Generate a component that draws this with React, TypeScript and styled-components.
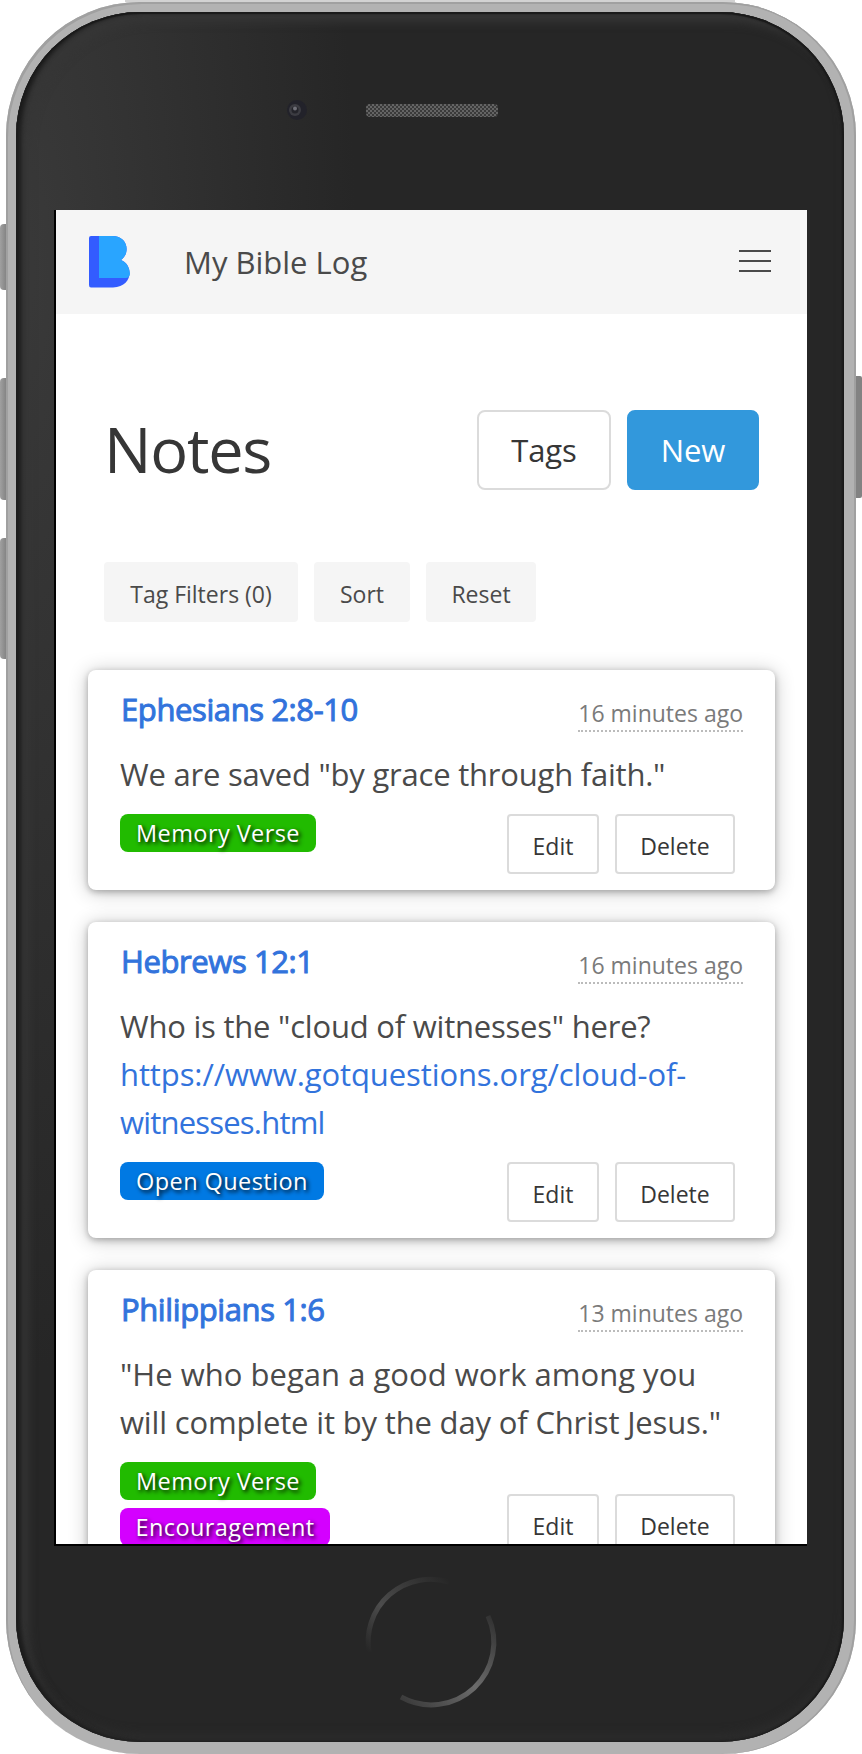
import React from "react";
import styled, { createGlobalStyle } from "styled-components";

const Global = createGlobalStyle`
  *, *::before, *::after { box-sizing: border-box; }
  body { margin: 0; background: #fff; }
`;

const Stage = styled.div`
  position: relative;
  width: 862px;
  height: 1754px;
  padding: 2px 6px 0;
  overflow: hidden;
  font-family: "Open Sans", "Noto Sans", sans-serif;
  color: #4a4a4a;
`;

const SideKey = styled.span<{ $side: "left" | "right"; $top: number; $height: number }>`
  position: absolute;
  ${(p) => p.$side}: 0;
  top: ${(p) => p.$top}px;
  width: 7px;
  height: ${(p) => p.$height}px;
  border-radius: ${(p) => (p.$side === "left" ? "4px 0 0 4px" : "0 2px 2px 0")};
  background: ${(p) =>
    p.$side === "left" ? "linear-gradient(90deg, #a0a0a0, #808080)" : "#828282"};
`;

const TopGlint = styled.span`
  position: absolute;
  top: 0;
  left: 125px;
  width: 610px;
  height: 2px;
  background: #d2d2d2;
`;

const Shell = styled.div`
  position: relative;
  width: 850px;
  height: 1752px;
  padding: 10px 12px 12px 10px;
  border-radius: 134px;
  background: #b2b2b2;
  box-shadow: inset 2px 2px 0 #a0a0a0, inset -2px 0 0 #a0a0a0;
`;

const Face = styled.div`
  display: flex;
  flex-direction: column;
  height: 1730px;
  padding: 0 38px;
  border-radius: 124px;
  background: radial-gradient(ellipse 340px 1100px at 0 260px, #3a3a3a, #262626);
  box-shadow: inset 0 2px 1px #1a1a1a, inset 5px 0 4px #1c1c1c, inset -2px 0 2px #1a1a1a,
    inset 12px 10px 10px #363636, inset 0 -8px 10px #2c2c2c;
`;

const TopBezel = styled.div`
  display: flex;
  flex: none;
  height: 198px;
  padding: 86px 0 0 233px;
  gap: 49px;
`;

const Screen = styled.main`
  flex: none;
  width: 753px;
  height: 1336px;
  border: solid #000;
  border-width: 0 0 2px 2px;
  background: #fff;
  overflow: hidden;
`;

const BottomBezel = styled.div`
  display: flex;
  justify-content: center;
  padding-top: 26px;
  padding-left: 2px;
`;

const Navbar = styled.header`
  display: flex;
  align-items: center;
  height: 104px;
  padding: 0 36px 0 32px;
  background: #f5f5f5;
`;

const Brand = styled.span`
  flex: 1;
  padding-left: 53px;
  font-size: 31px;
`;

const Burger = styled.span`
  display: flex;
  flex-direction: column;
  gap: 8px;
  width: 32px;
  margin-bottom: 2px;

  i {
    height: 2px;
    background: #4a4a4a;
  }
`;

const Heading = styled.section`
  display: flex;
  align-items: center;
  gap: 16px;
  padding: 96px 48px 0;
  height: 176px;
`;

const Title = styled.h1`
  flex: 1;
  margin: -2px 0 0;
  font-size: 63px;
  font-weight: 400;
  line-height: 80px;
  letter-spacing: -1.2px;
  color: #363636;
`;

const Button = styled.button<{ $primary?: boolean; $width: number }>`
  width: ${(p) => p.$width}px;
  height: 80px;
  padding: 0;
  border: 2px solid ${(p) => (p.$primary ? "#3298dc" : "#dbdbdb")};
  border-radius: 8px;
  background: ${(p) => (p.$primary ? "#3298dc" : "#fff")};
  color: ${(p) => (p.$primary ? "#fff" : "#363636")};
  font: 400 31px "Open Sans", sans-serif;
  letter-spacing: -0.1px;
`;

const SmallButton = styled(Button)<{ $plain?: boolean }>`
  height: 60px;
  padding-top: 3px;
  border-radius: 4px;
  font-size: 23px;
  letter-spacing: 0;
  ${(p) => p.$plain && "border-color: #f5f5f5; background: #f5f5f5; color: #4a4a4a;"}
`;

const Filters = styled.div`
  display: flex;
  gap: 16px;
  padding: 72px 48px 48px;
`;

const Notes = styled.div`
  display: flex;
  flex-direction: column;
  gap: 32px;
  padding: 0 32px;
`;

const Card = styled.article`
  padding: 16px 32px;
  border-radius: 8px;
  background: #fff;
  box-shadow: 0 2px 6px rgba(0, 0, 0, 0.26), 0 2px 20px rgba(0, 0, 0, 0.24);
`;

const CardHead = styled.div`
  display: flex;
  justify-content: space-between;
  height: 64px;
`;

const Passage = styled.a`
  padding-left: 1px;
  font-size: 31px;
  line-height: 46px;
  letter-spacing: -0.4px;
  color: #3273dc;
  -webkit-text-stroke: 1px #3273dc;
`;

const Age = styled.time`
  height: 36px;
  margin-top: 10px;
  border-bottom: 2px dotted #bbb;
  font-size: 23px;
  line-height: 34px;
  color: #7a7a7a;
`;

const Body = styled.p`
  margin: 0 0 16px;
  font-size: 31px;
  line-height: 48px;
`;

const Run = styled.span<{ $tracking?: number }>`
  letter-spacing: ${(p) => p.$tracking ?? -0.22}px;
`;

const Link = styled.a`
  color: #3273dc;
  letter-spacing: -0.1px;
`;

const LinkTail = styled.span`
  letter-spacing: -0.8px;
`;

const CardFoot = styled.div`
  display: flex;
  align-items: flex-end;
  justify-content: space-between;
`;

const Tags = styled.div`
  display: flex;
  flex-direction: column;
  align-items: flex-start;
  align-self: flex-start;
  gap: 8px;
  padding-bottom: 8px;
`;

const Tag = styled.span<{ $color: string; $width: number }>`
  width: ${(p) => p.$width}px;
  height: 38px;
  border-radius: 8px;
  background: ${(p) => p.$color};
  color: #fff;
  font-size: 23.5px;
  line-height: 39px;
  letter-spacing: 0.42px;
  text-align: center;
  text-shadow: 2px 2px 4px #000;
`;

const Actions = styled.div`
  display: flex;
  gap: 16px;
  margin-right: 8px;
`;

const Logo = () => (
  <svg width="43" height="52" viewBox="0 0 43 52">
    <path d="M3 0H24C41 0 42 18 33 24C46 29 45 51 25 51.500H3Q1 51.500 1 49V2Q1 0 3 0Z" fill="#335cff" />
    <path d="M11 0H24C41 0 42 18 33 24Q41 27 42 38Q41 42 38 42H11Z" fill="#29a5ff" />
  </svg>
);

const Camera = () => (
  <svg width="30" height="30" viewBox="0 0 30 30">
    <circle cx="10" cy="12" r="10" fill="#20202a" opacity=".8" />
    <circle cx="8" cy="12" r="6" fill="#3c3c42" />
    <circle cx="8" cy="12" r="3.5" fill="#24242a" />
    <circle cx="8" cy="10.500" r="2" fill="#707078" />
  </svg>
);

const Speaker = () => (
  <svg width="134" height="26" viewBox="0 0 134 26">
    <defs>
      <pattern id="mesh" width="4" height="4" patternUnits="userSpaceOnUse">
        <rect width="4" height="4" fill="#3a3a3a" />
        <rect width="2" height="2" fill="#646464" />
        <rect x="2" y="2" width="2" height="2" fill="#646464" />
      </pattern>
    </defs>
    <rect x="0" y="6" width="132" height="13" rx="4" fill="url(#mesh)" />
  </svg>
);

const HomeKey = () => (
  <svg width="140" height="140" viewBox="-70 -70 140 140" fill="none">
    <defs>
      <linearGradient id="arcA" x1="0" y1="1" x2="1" y2="0">
        <stop offset="0" stopColor="#262626" />
        <stop offset=".4" stopColor="#4c4c4c" />
        <stop offset="1" stopColor="#262626" />
      </linearGradient>
      <linearGradient id="arcB" x1="1" y1="0" x2="0" y2="1">
        <stop offset="0" stopColor="#303030" />
        <stop offset=".5" stopColor="#6c6c6c" />
        <stop offset="1" stopColor="#383838" />
      </linearGradient>
    </defs>
    <path d="M-62 10A62.500 62.500 0 0 1 18 -60" stroke="url(#arcA)" strokeWidth="5" />
    <path d="M57 -26A62.500 62.500 0 0 1 -30 55" stroke="url(#arcB)" strokeWidth="5" />
  </svg>
);

type Note = {
  passage: string;
  age: string;
  text: { value: string; tracking?: number }[];
  link?: [string, string];
  tags: { label: string; color: string; width: number }[];
};

const memory = { label: "Memory Verse", color: "#21bb00", width: 196 };

const notes: Note[] = [
  {
    passage: "Ephesians 2:8-10",
    age: "16 minutes ago",
    text: [{ value: 'We are saved "by grace through faith."' }],
    tags: [memory],
  },
  {
    passage: "Hebrews 12:1",
    age: "16 minutes ago",
    text: [{ value: 'Who is the "cloud of witnesses" here?' }],
    link: ["https://www.gotquestions.org/cloud-of-", "witnesses.html"],
    tags: [{ label: "Open Question", color: "#0079e3", width: 204 }],
  },
  {
    passage: "Philippians 1:6",
    age: "13 minutes ago",
    text: [
      { value: '"He who began a good work among you ', tracking: 0.02 },
      { value: "will complete it by the day of Christ Jesus.\"", tracking: -0.16 },
    ],
    tags: [memory, { label: "Encouragement", color: "#d400ff", width: 210 }],
  },
];

export default function App() {
  return (
    <Stage>
      <Global />
      <TopGlint />
      <SideKey $side="left" $top={224} $height={66} />
      <SideKey $side="left" $top={378} $height={122} />
      <SideKey $side="left" $top={538} $height={121} />
      <SideKey $side="right" $top={376} $height={122} />
      <Shell>
        <Face>
          <TopBezel>
            <Camera />
            <Speaker />
          </TopBezel>
          <Screen>
            <Navbar>
              <Logo />
              <Brand>My Bible Log</Brand>
              <Burger><i /><i /><i /></Burger>
            </Navbar>
            <Heading>
              <Title>Notes</Title>
              <Button $width={134}>Tags</Button>
              <Button $width={132} $primary>New</Button>
            </Heading>
            <Filters>
              <SmallButton $plain $width={194}>Tag Filters (0)</SmallButton>
              <SmallButton $plain $width={96}>Sort</SmallButton>
              <SmallButton $plain $width={110}>Reset</SmallButton>
            </Filters>
            <Notes>
              {notes.map((note) => (
                <Card key={note.passage}>
                  <CardHead>
                    <Passage>{note.passage}</Passage>
                    <Age>{note.age}</Age>
                  </CardHead>
                  <Body>
                    {note.text.map((run) => (
                      <Run key={run.value} $tracking={run.tracking}>{run.value}</Run>
                    ))}
                    {note.link && (
                      <>
                        <br />
                        <Link>{note.link[0]}<LinkTail>{note.link[1]}</LinkTail></Link>
                      </>
                    )}
                  </Body>
                  <CardFoot>
                    <Tags>
                      {note.tags.map((tag) => (
                        <Tag key={tag.label} $color={tag.color} $width={tag.width}>{tag.label}</Tag>
                      ))}
                    </Tags>
                    <Actions>
                      <SmallButton $width={92}>Edit</SmallButton>
                      <SmallButton $width={120}>Delete</SmallButton>
                    </Actions>
                  </CardFoot>
                </Card>
              ))}
            </Notes>
          </Screen>
          <BottomBezel>
            <HomeKey />
          </BottomBezel>
        </Face>
      </Shell>
    </Stage>
  );
}
